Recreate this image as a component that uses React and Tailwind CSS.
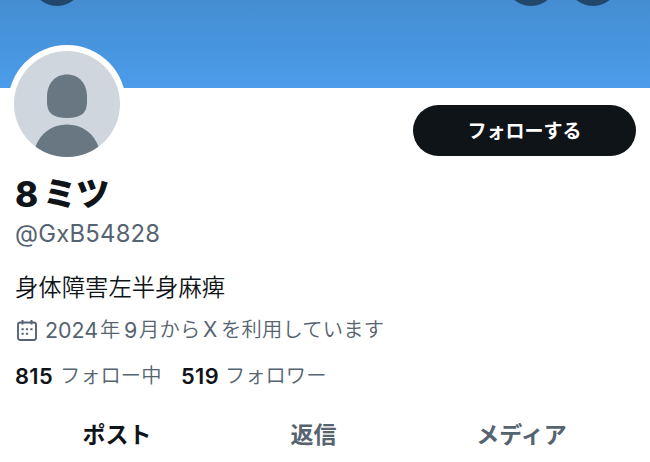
const jp = "font-['Inter','Noto_Sans_CJK_JP',sans-serif]";

function Avatar() {
  return (
    <div className="ml-2 -mt-[43px] h-[118px] w-[118px] shrink-0 rounded-full bg-white p-1.5">
      <svg viewBox="0 0 106 106" className="block h-[106px] w-[106px] rounded-full bg-[#cfd6de]">
        <path
          fill="#697783"
          d="M53 23.5C65 23.5 73 32.5 73 46V51C73 62 67 67 53 67S33 62 33 51V46C33 32.5 41 23.5 53 23.5Z"
        />
        <path fill="#697783" d="M21 97C26 82 38 73.500 53 73.500S80 82 85 97V106H21Z" />
      </svg>
    </div>
  );
}

function CalendarIcon() {
  return (
    <svg viewBox="0 0 20 21" className="h-[21px] w-5 shrink-0" fill="none" stroke="#566370">
      <rect x="1" y="2.500" width="18" height="17.5" rx="2.2" strokeWidth="1.9" />
      <path d="M5.500 0V4.500M14.500 0V4.500" strokeWidth="1.9" />
      <path
        d="M8.900 9.300H11.100M13.300 9.300H15.500M4.500 13.700H6.700M8.900 13.700H11.100M4.500 9.300H6.700"
        strokeWidth="2"
      />
    </svg>
  );
}

export default function App() {
  return (
    <main className={`h-[462px] w-[650px] overflow-hidden bg-white text-[#0f1419] ${jp}`} lang="ja">
      <header className="flex h-[88px] justify-between overflow-hidden bg-linear-to-b from-[#448dd1] to-[#4b9cea] pr-[31px] pl-[31px]">
        <div className="-mt-[46px] h-[52px] w-[52px] rounded-full bg-[#23476a]" />
        <div className="-mt-[46px] flex gap-[10px]">
          <div className="h-[52px] w-[52px] rounded-full bg-[#23476a]" />
          <div className="h-[52px] w-[52px] rounded-full bg-[#23476a]" />
        </div>
      </header>

      <div className="flex h-[83px] items-start justify-between pr-3.5">
        <Avatar />
        <button className="mt-[17px] h-[51px] w-[223px] rounded-full bg-[#0f1419] pt-0.5 text-[19px] leading-[49px] font-bold text-white">
          フォローする
        </button>
      </div>

      <section className="pl-[15px]">
        <h1 className="flex h-[46px] items-center text-[33.500px] leading-[46px] font-black whitespace-nowrap">
          <span className="w-[28px] pb-px text-[35px] font-extrabold">8</span>
          <span className="tracking-[-0.5px]">ミツ</span>
        </h1>
        <p className="h-[34px] text-[23.800px] leading-[34px] tracking-[0.25px] text-[#566370]">@GxB54828</p>
        <p className="mt-5 h-[34px] text-[23.350px] leading-[34px] font-[350] whitespace-nowrap">身体障害左半身麻痺</p>
        <div className="mt-2 flex h-[34px] items-center pl-[2px] text-[20.300px] font-[350] whitespace-nowrap text-[#566370]">
          <CalendarIcon />
          <span className="ml-2 w-[55px] text-[21.400px] font-normal">2024</span>
          <span className="w-6">年</span>
          <span className="w-[15px] text-[21.400px] font-normal">9</span>
          <span className="w-[64px] tracking-[0.2px]">月から</span>
          <span className="w-[18px] text-[21px] font-normal">X</span>
          <span className="tracking-[0.2px]">を利用しています</span>
        </div>
        <div className="mt-3 flex h-[34px] items-center text-[20.300px] font-[350] whitespace-nowrap text-[#566370]">
          <span className="w-[45px] text-[21.800px] font-semibold tracking-[0.4px] text-[#0f1419]">815</span>
          <span className="w-[121px] pt-px">フォロー中</span>
          <span className="w-11 text-[21.800px] font-semibold tracking-[0.4px] text-[#0f1419]">519</span>
          <span className="pt-px">フォロワー</span>
        </div>
      </section>

      <nav className="mt-5 flex h-11 items-center text-[23px] leading-[44px] font-bold whitespace-nowrap text-[#566370]">
        <span className="w-[234px] text-center text-[#0f1419]">ポスト</span>
        <span className="w-[159px] text-center">返信</span>
        <span className="w-[257px] text-center">メディア</span>
      </nav>
    </main>
  );
}
